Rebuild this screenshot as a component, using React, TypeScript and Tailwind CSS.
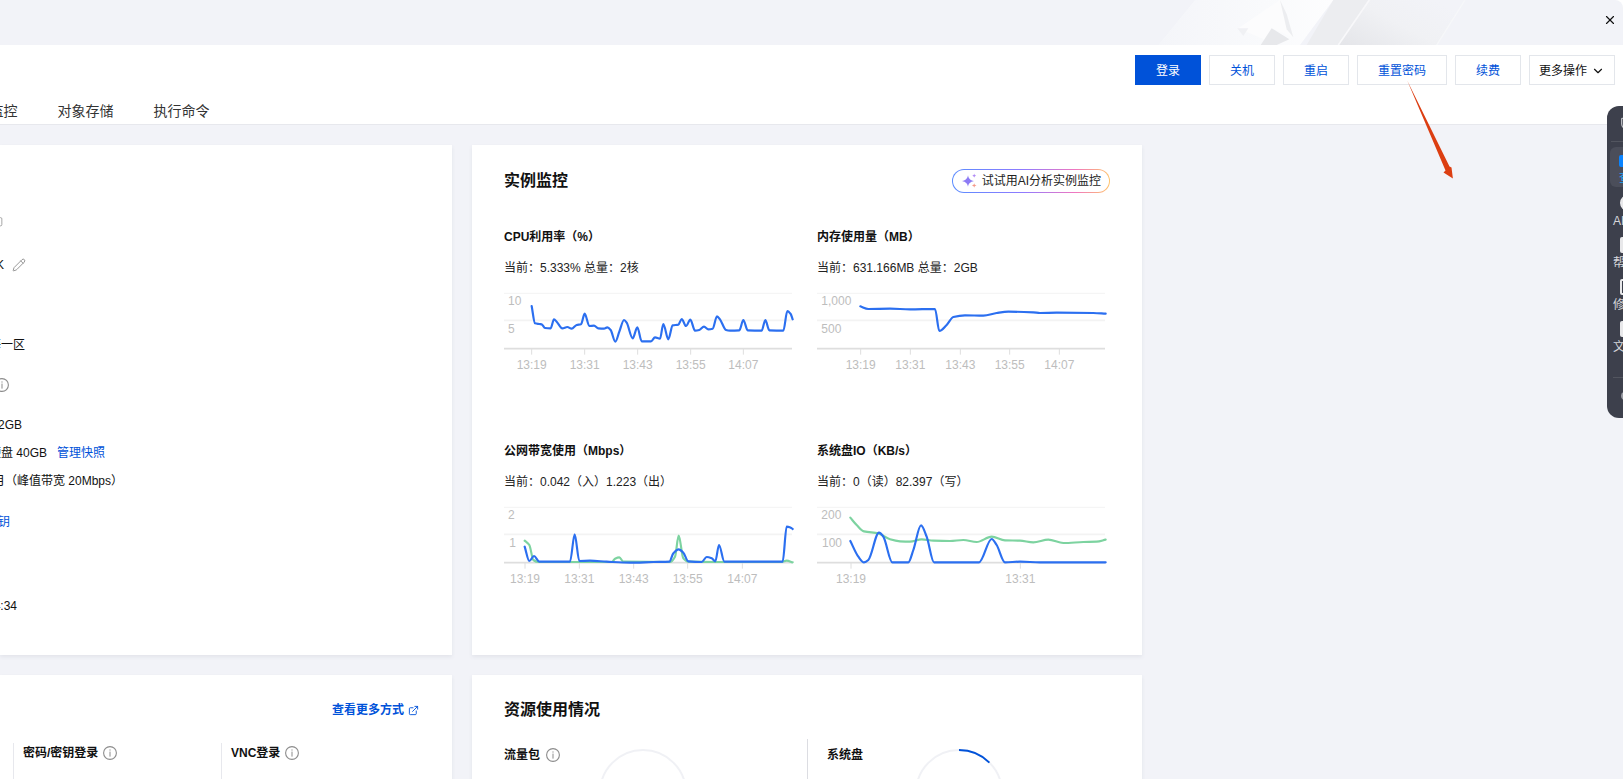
import { ChevronDown, Copy, ExternalLink, Pencil, Shield, X } from "lucide-react"

type Pt = [number, number]

// chart data is written in 3x units, the svg viewBox scales it back down
const smooth = (pts: Pt[]) => {
  const slope = (a: Pt, b: Pt) => (b[1] - a[1]) / (b[0] - a[0])
  const tangents = pts.map((p, i) => {
    if (i === 0) return slope(p, pts[1])
    if (i === pts.length - 1) return slope(pts[i - 1], p)
    const s0 = slope(pts[i - 1], p)
    const s1 = slope(p, pts[i + 1])
    return s0 * s1 <= 0 ? 0 : (2 * s0 * s1) / (s0 + s1)
  })
  let d = `M${pts[0][0]} ${pts[0][1]}`
  for (let i = 0; i < pts.length - 1; i++) {
    const [x1, y1] = pts[i]
    const [x2, y2] = pts[i + 1]
    const h = (x2 - x1) / 3
    d += ` C${x1 + h} ${y1 + tangents[i] * h} ${x2 - h} ${y2 - tangents[i + 1] * h} ${x2} ${y2}`
  }
  return d
}

const BLUE = "#2b6ff0"
const GREEN = "#7dd3a0"

const cpu: Pt[] = [[155,498],[165,550],[178,552],[185,553],[195,564],[212,565],[222,538],[230,545],[247,565],[262,561],[275,566],[290,555],[303,553],[314,521],[328,558],[342,557],[355,565],[372,566],[382,562],[392,570],[406,605],[418,575],[432,540],[440,548],[458,595],[472,562],[485,604],[513,604],[525,592],[540,596],[550,552],[565,598],[578,556],[595,554],[605,537],[618,558],[631,539],[645,572],[658,570],[672,560],[685,568],[698,566],[711,529],[720,538],[738,570],[750,572],[778,571],[790,540],[803,571],[845,572],[856,540],[868,571],[910,572],[922,513],[932,522],[938,538]]
const mem: Pt[] = [[181,499],[205,507],[270,506],[330,508],[405,507],[418,573],[440,555],[460,531],[495,526],[550,527],[590,519],[625,515],[700,517],[720,519],[770,518],[880,519],[917,521]]
const netIn: Pt[] = [[134,362],[148,375],[160,420],[175,426],[395,426],[405,416],[418,412],[430,425],[570,426],[585,410],[596,347],[610,415],[625,425],[705,426],[905,426],[920,422],[938,427]]
const netOut: Pt[] = [[134,380],[148,423],[162,408],[178,425],[270,425],[284,343],[298,423],[330,422],[380,425],[450,428],[520,426],[568,425],[580,400],[596,388],[610,398],[625,424],[665,426],[680,411],[695,415],[706,424],[717,375],[733,425],[908,425],[920,320],[932,323],[938,327]]
const ioRead: Pt[] = [[151,363],[175,410],[192,427],[205,420],[237,338],[250,350],[277,427],[325,427],[340,390],[363,316],[380,350],[402,427],[537,427],[575,357],[590,375],[615,427],[660,425],[720,427],[917,427]]
const ioWrite: Pt[] = [[151,293],[170,315],[192,334],[235,340],[270,358],[300,364],[330,365],[365,358],[400,362],[450,363],[490,360],[530,366],[575,350],[615,361],[660,362],[700,367],[745,359],[790,369],[850,366],[890,365],[917,359]]

const charts = [
  {
    title: "CPU利用率（%）",
    current: "当前：5.333% 总量：2核",
    x0: 72, y0: 459, w: 864,
    ticks: [[155, "13:19"], [314, "13:31"], [473, "13:43"], [632, "13:55"], [790, "14:07"]] as [number, string][],
    ys: [[84, "10"], [84, "5"]] as [number, string][],
    lines: [{ c: BLUE, p: cpu }],
  },
  {
    title: "内存使用量（MB）",
    current: "当前：631.166MB 总量：2GB",
    x0: 51, y0: 459, w: 864,
    ticks: [[182, "13:19"], [331, "13:31"], [481, "13:43"], [629, "13:55"], [778, "14:07"]] as [number, string][],
    ys: [[64, "1,000"], [64, "500"]] as [number, string][],
    lines: [{ c: BLUE, p: mem }],
  },
  {
    title: "公网带宽使用（Mbps）",
    current: "当前：0.042（入）1.223（出）",
    x0: 72, y0: 261, w: 864,
    ticks: [[135, "13:19"], [298, "13:31"], [461, "13:43"], [623, "13:55"], [787, "14:07"]] as [number, string][],
    ys: [[84, "2"], [88, "1"]] as [number, string][],
    lines: [{ c: GREEN, p: netIn }, { c: BLUE, p: netOut }],
  },
  {
    title: "系统盘IO（KB/s）",
    current: "当前：0（读）82.397（写）",
    x0: 51, y0: 261, w: 864,
    ticks: [[153, "13:19"], [661, "13:31"]] as [number, string][],
    ys: [[64, "200"], [66, "100"]] as [number, string][],
    lines: [{ c: GREEN, p: ioWrite }, { c: BLUE, p: ioRead }],
  },
]

function Chart({ x0, y0, w, ticks, ys, lines }: (typeof charts)[number]) {
  const top = y0 + 1
  const mid = y0 + 82
  const base = y0 + 167
  return (
    <svg width={300} height={90} viewBox={`${x0} ${y0} 900 270`} className="block overflow-visible">
      <line x1={x0} x2={x0 + w} y1={top} y2={top} stroke="#f3f3f3" strokeWidth={3} />
      <line x1={x0} x2={x0 + w} y1={mid} y2={mid} stroke="#f3f3f3" strokeWidth={5} />
      <line x1={x0} x2={x0 + w} y1={base} y2={base} stroke="#dedede" strokeWidth={5} />
      {ticks.map(([x, label]) => (
        <g key={label}>
          <line x1={x} x2={x} y1={base} y2={base + 18} stroke="#dedede" strokeWidth={3} />
          <text x={x} y={base + 60} textAnchor="middle" fontSize={36} fill="#bdbdbd">
            {label}
          </text>
        </g>
      ))}
      <text x={ys[0][0]} y={y0 + 36} fontSize={36} fill="#bdbdbd">{ys[0][1]}</text>
      <text x={ys[1][0]} y={y0 + 120} fontSize={36} fill="#bdbdbd">{ys[1][1]}</text>
      {lines.map((l) => (
        <path key={l.c} d={smooth(l.p)} fill="none" stroke={l.c} strokeWidth={6.5} strokeLinejoin="round" strokeLinecap="round" />
      ))}
    </svg>
  )
}

function InfoIcon() {
  return (
    <svg width="14" height="14" viewBox="0 0 14 14" className="shrink-0">
      <circle cx="7" cy="7" r="6.4" fill="none" stroke="#8c8c8c" strokeWidth="1.1" />
      <rect x="6.5" y="3.4" width="1" height="1.2" fill="#8c8c8c" />
      <rect x="6.5" y="5.6" width="1" height="5" fill="#8c8c8c" />
    </svg>
  )
}

function Ring({ progress }: { progress?: boolean }) {
  return (
    <svg width="88" height="88" viewBox="0 0 88 88" className="mt-[10px] shrink-0">
      <circle cx="44" cy="44" r="43" fill="none" stroke="#f0f1f5" strokeWidth="2" />
      {progress && <path d="M44 1 A43 43 0 0 1 74.4 13.6" fill="none" stroke="#0052d9" strokeWidth="2" />}
    </svg>
  )
}

function HeaderArt() {
  return (
    <svg width="380" height="45" viewBox="0 0 1140 135" className="absolute left-[1130px] top-0 blur-[0.6px]">
      <defs>
        <linearGradient id="band" x1="0" y1="1" x2="1" y2="0.35">
          <stop offset="0" stopColor="#e4e5e9" />
          <stop offset="0.55" stopColor="#f0f1f4" />
          <stop offset="1" stopColor="#f2f3f8" />
        </linearGradient>
        <linearGradient id="sheen" x1="0" y1="0" x2="1" y2="0">
          <stop offset="0" stopColor="#f4f5f9" />
          <stop offset="0.6" stopColor="#f9fafc" />
          <stop offset="1" stopColor="#fdfdfe" />
        </linearGradient>
      </defs>
      <polygon points="85,135 195,0 610,0 510,135" fill="url(#sheen)" />
      <polygon points="530,135 610,0 720,0 625,135" fill="#ecedf0" />
      <polygon points="625,135 715,0 1005,0 920,135" fill="url(#band)" />
      <line x1="625" y1="135" x2="718" y2="0" stroke="#f8f8fa" strokeWidth="5" />
      <line x1="920" y1="135" x2="1005" y2="0" stroke="#f6f7f9" strokeWidth="4" />
      <polygon points="325,85 450,0 470,45 490,112 425,85 392,135 440,135" fill="#fcfcfd" />
      <polygon points="322,85 355,85 340,108" fill="#f0f1f4" />
      <polygon points="450,0 470,42 490,112 470,88" fill="#ecedf0" />
      <polygon points="392,135 425,85 478,118 440,135" fill="#e7e8eb" />
    </svg>
  )
}

export default function App() {
  const rowText = "text-[12px] leading-5 whitespace-nowrap"
  const font = { fontFamily: '"Liberation Sans", "Noto Sans CJK SC", sans-serif' }

  return (
    <div className="relative h-screen w-full overflow-hidden bg-white text-[#111]" style={font}>
      {/* top strip */}
      <div className="relative flex h-[45px] items-start justify-end overflow-hidden rounded-tr-lg bg-[#f2f3f8] pt-[13px] pr-[6px]">
        <HeaderArt />
        <X size={14} strokeWidth={2} className="relative text-[#111]" />
      </div>

      {/* title bar + tabs */}
      <div className="h-[80px] border-b border-[#e7e8ed] bg-white">
        <div className="flex justify-end gap-2 pt-[10px] pr-2 text-[12px]">
          <button className="h-[30px] w-[66px] bg-[#0052d9] pt-px text-white">登录</button>
          <button className="h-[30px] w-[66px] border border-[#e3e6eb] pt-px text-[#0052d9]">关机</button>
          <button className="h-[30px] w-[66px] border border-[#e3e6eb] pt-px text-[#0052d9]">重启</button>
          <button className="h-[30px] w-[90px] border border-[#e3e6eb] pt-px text-[#0052d9]">重置密码</button>
          <button className="h-[30px] w-[66px] border border-[#e3e6eb] pt-px text-[#0052d9]">续费</button>
          <button className="flex h-[30px] w-[86px] items-center justify-center gap-1 border border-[#e3e6eb] pt-px text-[#111]">
            更多操作
            <ChevronDown size={14} strokeWidth={2} />
          </button>
        </div>
        <div className="mt-4 -ml-[10.5px] flex gap-10 text-[14px] leading-5 text-[#333]">
          <span>监控</span>
          <span>对象存储</span>
          <span>执行命令</span>
        </div>
      </div>

      {/* content */}
      <div className="flex h-[654px] items-start gap-5 bg-[#f2f3f8] pt-5">
        <div className="flex w-[452px] shrink-0 flex-col gap-5">
          <div className="h-[510px] bg-white shadow-[0_2px_4px_rgba(54,58,80,0.08)]">
            <div className="box-content flex h-5 w-[3px] justify-end pt-[68px] text-[#999]">
              <Copy size={14} strokeWidth={1.5} className="shrink-0" />
            </div>
            <div className={`mt-[22px] flex w-[26px] items-center justify-end gap-2 ${rowText}`}>
              <span>K</span>
              <Pencil size={14} strokeWidth={1.5} className="shrink-0 text-[#888]" />
            </div>
            <div className={`mt-[60px] flex w-[25px] justify-end ${rowText}`}>上海一区</div>
            <div className="mt-[20px] flex h-5 w-[9px] items-center justify-end">
              <InfoIcon />
            </div>
            <div className={`mt-[20px] flex w-[22px] justify-end ${rowText}`}>2GB</div>
            <div className={`mt-[8px] flex w-[105px] justify-end ${rowText}`}>
              <span>云硬盘 40GB</span>
              <span className="ml-[10px] text-[#0052d9]">管理快照</span>
            </div>
            <div className={`mt-[8px] flex w-[123px] justify-end ${rowText}`}>/月（峰值带宽 20Mbps）</div>
            <div className={`mt-[21px] flex w-[10px] justify-end text-[#0052d9] ${rowText}`}>密钥</div>
            <div className={`mt-[64px] flex w-[17px] justify-end ${rowText}`}>14:34</div>
          </div>

          <div className="h-[200px] bg-white shadow-[0_2px_4px_rgba(54,58,80,0.08)]">
            <div className="flex items-center justify-end gap-1 pt-[25px] pr-[33px] text-[12px] leading-5 font-semibold text-[#0052d9]">
              查看更多方式
              <ExternalLink size={11} strokeWidth={2} />
            </div>
            <div className="mt-[23px] flex h-[60px] text-[12px] leading-5 font-semibold">
              <div className="w-[13px]" />
              <div className="flex w-[208px] items-start gap-[5px] border-l border-[#e7e8ed] pl-[9px]">
                <span>密码/密钥登录</span>
                <span className="flex h-5 items-center"><InfoIcon /></span>
              </div>
              <div className="flex items-start gap-[5px] border-l border-[#e7e8ed] pl-[9px]">
                <span>VNC登录</span>
                <span className="flex h-5 items-center"><InfoIcon /></span>
              </div>
            </div>
          </div>
        </div>

        <div className="flex w-[670px] shrink-0 flex-col gap-5">
          <div className="h-[510px] bg-white px-8 pt-6 shadow-[0_2px_4px_rgba(54,58,80,0.08)]">
            <div className="flex h-6 items-center justify-between">
              <h2 className="text-[16px] font-semibold">实例监控</h2>
              <div className="rounded-full bg-[linear-gradient(90deg,#5b8cff,#8f7bff_45%,#f077c0_78%,#ffc46b)] p-px">
                <div className="flex h-[22px] items-center gap-[5px] rounded-full bg-white pr-2 pl-[9px] text-[12px] text-[#222]">
                  <svg width="15" height="16" viewBox="0 0 15 16" className="shrink-0">
                    <path d="M6 2.2 C6.7 5.6 8 7 12 8 C8 9 6.7 10.4 6 13.8 C5.3 10.4 4 9 0 8 C4 7 5.3 5.6 6 2.2Z" fill="#8d7bf5" />
                    <path d="M12.2 .6 C12.4 1.9 12.9 2.4 14.2 2.7 C12.9 3 12.4 3.5 12.2 4.8 C12 3.5 11.5 3 10.2 2.7 C11.5 2.4 12 1.9 12.2 .6Z" fill="#b18cf5" />
                    <path d="M12.2 10.2 C12.4 11.5 12.9 12 14.6 12.4 C12.9 12.8 12.4 13.3 12.2 14.8 C12 13.3 11.5 12.8 9.8 12.4 C11.5 12 12 11.5 12.2 10.2Z" fill="#f59a8a" />
                  </svg>
                  试试用AI分析实例监控
                </div>
              </div>
            </div>
            <div className="mt-[34px] grid auto-rows-[214px] grid-cols-[313px_293px]">
              {charts.map((c) => (
                <div key={c.title}>
                  <div className="h-5 text-[12px] leading-5 font-semibold">{c.title}</div>
                  <div className="mt-[11px] h-5 text-[12px] leading-5 text-[#222]">{c.current}</div>
                  <div className="mt-[15px]">
                    <Chart {...c} />
                  </div>
                </div>
              ))}
            </div>
          </div>

          <div className="h-[200px] bg-white px-8 pt-[25px] shadow-[0_2px_4px_rgba(54,58,80,0.08)]">
            <h2 className="h-5 text-[16px] leading-5 font-semibold">资源使用情况</h2>
            <div className="mt-[19px] flex h-[60px] overflow-hidden text-[12px] font-semibold">
              <div className="flex w-[304px] items-start border-r border-[#dcdde2]">
                <div className="mt-[6px] flex h-5 items-center gap-[6px] leading-5">
                  流量包
                  <InfoIcon />
                </div>
                <div className="ml-[38.5px]">
                  <Ring />
                </div>
              </div>
              <div className="flex items-start pl-[19px]">
                <div className="mt-[6px] h-5 leading-5">系统盘</div>
                <div className="ml-[51.7px]">
                  <Ring progress />
                </div>
              </div>
            </div>
          </div>
        </div>
      </div>

      {/* arrow annotation drawn over the page */}
      <svg className="absolute top-[75px] left-[1395px]" width="70" height="110" viewBox="1395 75 70 110">
        <polygon points="1407.2,80.6 1449.5,166.5 1451.5,167.5 1452.9,178.6 1443.5,172.5 1445.5,170.5" fill="#dc3e12" />
      </svg>

      {/* floating tool dock, cut off by the window edge */}
      <div className="absolute top-[106px] left-[1607px] h-[312px] w-[60px] overflow-hidden rounded-l-xl bg-[#3d404c] text-[12px] leading-4 text-[#d5d6da]">
        <div className="ml-[4px] h-[36px] border-b border-[#52555f] pt-[9px] pl-[8px]">
          <Shield size={16} className="text-[#b8bac0]" />
        </div>
        <div className="mt-[5px] ml-[3px] h-10 rounded-md bg-[#4b4e5a] pt-2 pl-[9px]">
          <div className="h-3 w-3 rounded-[2px] bg-[#0a84ff]" />
          <div className="mt-[3px] text-[#1ba3f5]">查看</div>
        </div>
        <div className="mt-2 pl-[6px]">
          <div className="h-[42px]">
            <div className="ml-[7px] h-4 w-4 rounded-full border-[3px] border-[#e8e8ea]" />
            <div className="mt-[2px]">AI助手</div>
          </div>
          <div className="h-[42px]">
            <div className="ml-[7px] h-4 w-4 rounded-[2px] bg-[#e8e8ea]" />
            <div className="mt-[2px]">帮助</div>
          </div>
          <div className="h-[42px]">
            <div className="ml-[7px] h-4 w-4 rounded-[2px] border-2 border-[#e8e8ea]" />
            <div className="mt-[2px]">修复</div>
          </div>
          <div className="h-[42px]">
            <div className="ml-[7px] h-4 w-4 rounded-[2px] bg-[#e8e8ea]" />
            <div className="mt-[2px]">文档</div>
          </div>
        </div>
        <div className="mt-[14px] ml-[6px] border-t border-[#52555f] pt-[14px] pl-[8px]">
          <div className="h-2 w-2 rounded-full border-2 border-[#9a9ca4]" />
        </div>
      </div>
    </div>
  )
}
